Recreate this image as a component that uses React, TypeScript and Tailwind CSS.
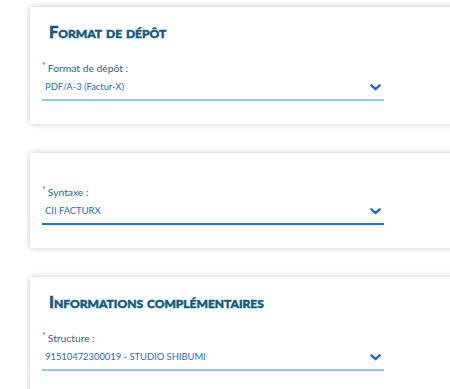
import React from "react";

const Chevron = ({ color }: { color: string }) => (
  <svg width="11" height="7" viewBox="0 0 11 7" className="shrink-0">
    <path d="M1.4 1.3 L5.5 5.2 L9.6 1.3" fill="none" stroke={color} strokeWidth="2.3" strokeLinecap="round" strokeLinejoin="round" />
  </svg>
);

const Field = ({ label, value, focused, top }: { label: string; value: string; focused?: boolean; top: string }) => (
  <div className={`ml-[12px] w-[342px] ${top}`}>
    <div className="flex items-start text-[10.3px] leading-[14px] text-[#1c6a96]">
      <span className="text-[#e53935] text-[9px] leading-[10px] mr-[2px]">*</span>
      <span>{label}</span>
    </div>
    <div
      className={`mt-[4px] flex items-center justify-between pl-[3px] pr-[3px] pb-[4px] border-b-2 ${
        focused ? "border-[#1a73d9]" : "border-[#90c8f8]"
      }`}
    >
      <span className="text-[9.4px] leading-[16px] text-[#1a6ccc]">{value}</span>
      <Chevron color="#1a6ccc" />
    </div>
  </div>
);

const Heading = ({ children }: { children: React.ReactNode }) => (
  <div
    className="ml-[19px] pt-[15px] text-[16.5px] leading-[20px] font-black text-[#0d5b89] [-webkit-text-stroke:0.5px_#0d5b89]"
    style={{ fontVariant: "small-caps" }}
  >
    {children}
  </div>
);

export default function App() {
  return (
    <div
      className="w-[450px] h-[389px] overflow-hidden bg-white pt-[7px]"
      style={{ fontFamily: "Lato, 'Noto Sans', sans-serif" }}
    >
      <div className="ml-[30px] w-[440px] h-[117px] bg-white shadow-[0_0_6px_rgba(0,0,0,0.22)]">
        <Heading>Format de dépôt</Heading>
        <Field top="mt-[19px]" label="Format de dépôt :" value="PDF/A-3 (Factur-X)" />
      </div>
      <div className="mt-[29px] ml-[30px] w-[440px] h-[95px] bg-white shadow-[0_0_6px_rgba(0,0,0,0.22)] pt-[32px]">
        <Field top="" label="Syntaxe :" value="CII FACTURX" focused />
      </div>
      <div className="mt-[29px] ml-[30px] w-[440px] h-[140px] bg-white shadow-[0_0_6px_rgba(0,0,0,0.22)]">
        <Heading>Informations complémentaires</Heading>
        <Field top="mt-[19px]" label="Structure :" value="91510472300019 - STUDIO SHIBUMI" />
      </div>
    </div>
  );
}
